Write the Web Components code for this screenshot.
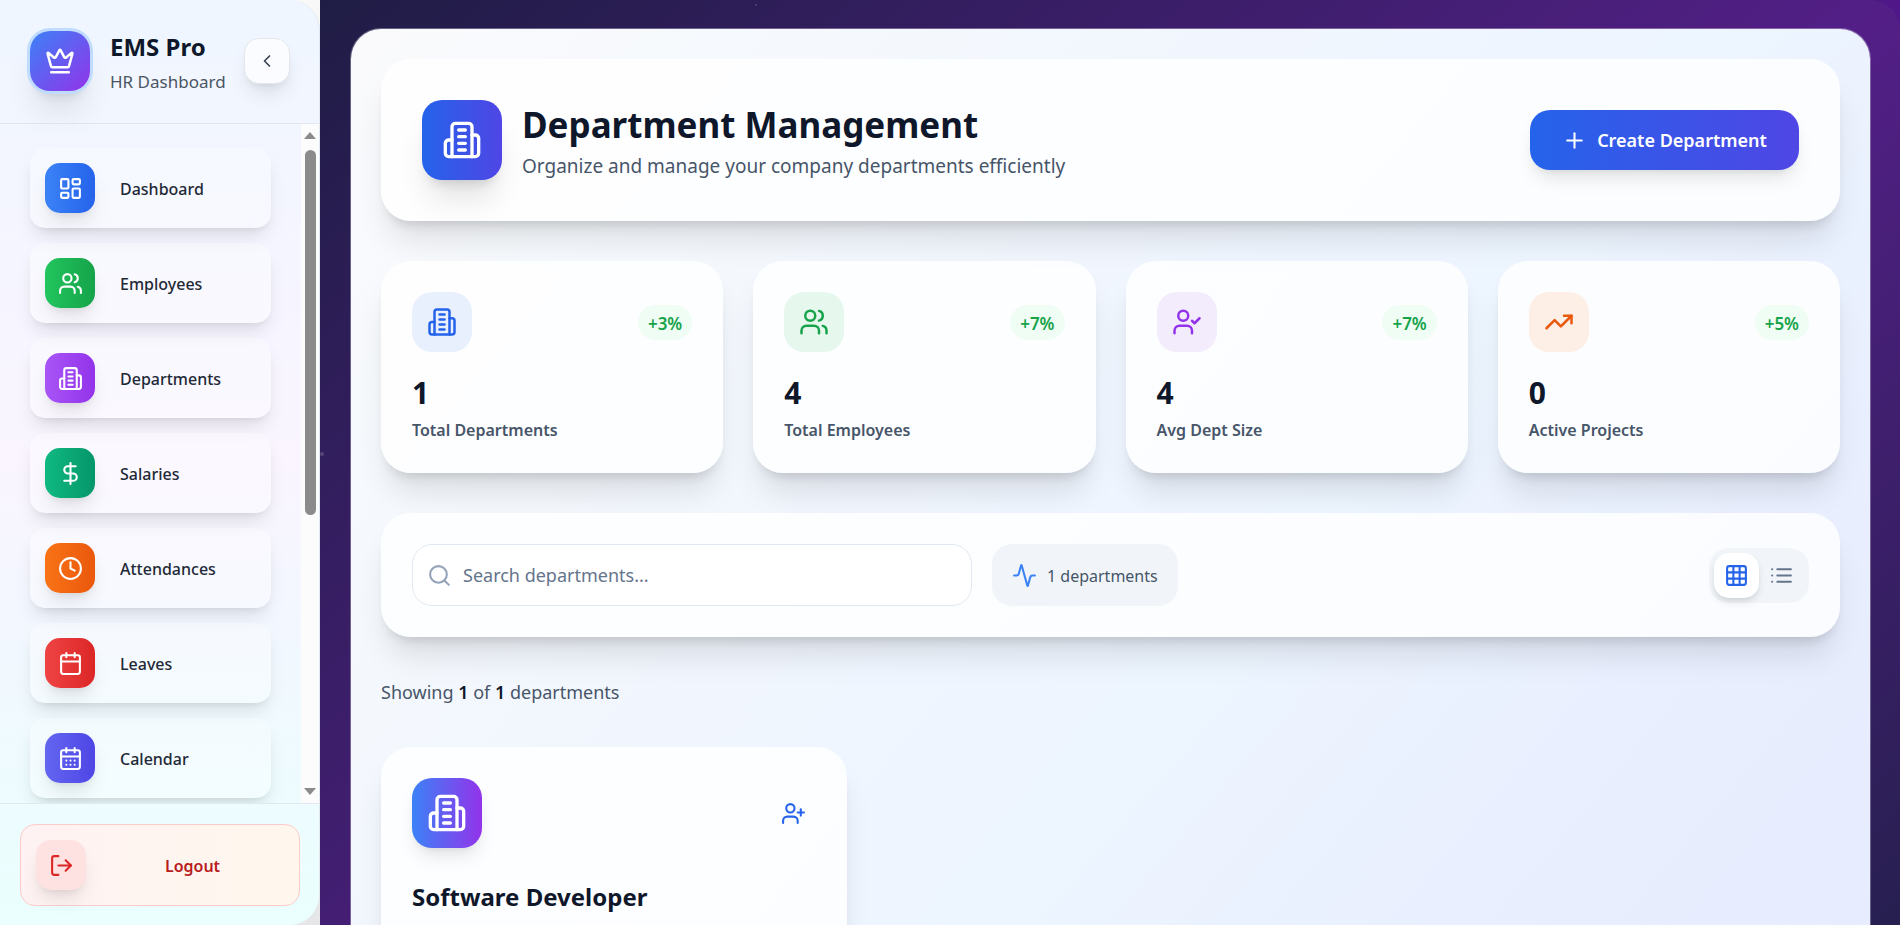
<!DOCTYPE html>
<html lang="en">
<head>
<meta charset="utf-8">
<meta name="viewport" content="width=device-width, initial-scale=1">
<title>EMS Pro - Department Management</title>
<style>
  html, body { margin: 0; height: 100%; overflow: hidden; }
  body {
    font-family: "Noto Sans", "Open Sans", sans-serif;
    font-size: 16px;
    color: #0f172a;
    background: linear-gradient(#f8f8f8, #e6e6e8);
    --shadow-lg: 0 12px 19px -4px rgba(0,0,0,.1), 0 5px 8px -5px rgba(0,0,0,.1);
    --shadow-xl: 0 25px 31px -6px rgba(0,0,0,.1), 0 10px 12px -7px rgba(0,0,0,.14);
  }
</style>
</head>
<body>
<ems-app>
  <ems-sidebar slot="sidebar">
    <nav-item icon="dashboard" from="#3b82f6" to="#2563eb">Dashboard</nav-item>
    <nav-item icon="users" from="#22c55e" to="#16a34a">Employees</nav-item>
    <nav-item icon="building" from="#a855f7" to="#9333ea">Departments</nav-item>
    <nav-item icon="dollar" from="#10b981" to="#059669">Salaries</nav-item>
    <nav-item icon="clock" from="#f97316" to="#ea580c">Attendances</nav-item>
    <nav-item icon="calendar" from="#ef4444" to="#dc2626">Leaves</nav-item>
    <nav-item icon="calendar-days" from="#6366f1" to="#4f46e5">Calendar</nav-item>
  </ems-sidebar>
  <page-header>
    <span slot="title">Department Management</span>
    <span slot="subtitle">Organize and manage your company departments efficiently</span>
  </page-header>
  <stat-grid>
    <stat-card icon="building" color="#2563eb" tint="#e8f0fe" value="1" change="+3%">Total Departments</stat-card>
    <stat-card icon="users" color="#16a34a" tint="#e6f7ee" value="4" change="+7%">Total Employees</stat-card>
    <stat-card icon="user-check" color="#9333ea" tint="#f3ecfd" value="4" change="+7%">Avg Dept Size</stat-card>
    <stat-card icon="trending-up" color="#ea580c" tint="#fdeee6" value="0" change="+5%">Active Projects</stat-card>
  </stat-grid>
  <filter-bar>1 departments</filter-bar>
  <result-count shown="1" total="1"></result-count>
  <department-grid>
    <department-card>Software Developer</department-card>
  </department-grid>
</ems-app>

<script>
const ICONS = {
  crown: '<path d="M11.562 3.266a.5.5 0 0 1 .876 0L15.39 8.87a1 1 0 0 0 1.516.294L21.183 5.5a.5.5 0 0 1 .798.519l-2.834 10.246a1 1 0 0 1-.956.734H5.81a1 1 0 0 1-.957-.734L2.02 6.02a.5.5 0 0 1 .798-.519l4.276 3.664a1 1 0 0 0 1.516-.294z"/><path d="M5 21h14"/>',
  'chevron-left': '<path d="m15 18-6-6 6-6"/>',
  dashboard: '<rect width="7" height="9" x="3" y="3" rx="1"/><rect width="7" height="5" x="14" y="3" rx="1"/><rect width="7" height="9" x="14" y="12" rx="1"/><rect width="7" height="5" x="3" y="16" rx="1"/>',
  users: '<path d="M16 21v-2a4 4 0 0 0-4-4H6a4 4 0 0 0-4 4v2"/><circle cx="9" cy="7" r="4"/><path d="M22 21v-2a4 4 0 0 0-3-3.87"/><path d="M16 3.13a4 4 0 0 1 0 7.75"/>',
  building: '<path d="M6 22V4a2 2 0 0 1 2-2h8a2 2 0 0 1 2 2v18Z"/><path d="M6 12H4a2 2 0 0 0-2 2v6a2 2 0 0 0 2 2h2"/><path d="M18 9h2a2 2 0 0 1 2 2v9a2 2 0 0 1-2 2h-2"/><path d="M10 6h4"/><path d="M10 10h4"/><path d="M10 14h4"/><path d="M10 18h4"/>',
  dollar: '<path d="M12 2v20"/><path d="M17 5H9.5a3.5 3.5 0 0 0 0 7h5a3.5 3.5 0 0 1 0 7H6"/>',
  clock: '<circle cx="12" cy="12" r="10"/><path d="M12 6v6l4 2"/>',
  calendar: '<path d="M8 2v4"/><path d="M16 2v4"/><rect width="18" height="18" x="3" y="4" rx="2"/><path d="M3 10h18"/>',
  'calendar-days': '<path d="M8 2v4"/><path d="M16 2v4"/><rect width="18" height="18" x="3" y="4" rx="2"/><path d="M3 10h18"/><path d="M8 14h.01"/><path d="M12 14h.01"/><path d="M16 14h.01"/><path d="M8 18h.01"/><path d="M12 18h.01"/><path d="M16 18h.01"/>',
  logout: '<path d="M9 21H5a2 2 0 0 1-2-2V5a2 2 0 0 1 2-2h4"/><path d="m16 17 5-5-5-5"/><path d="M21 12H9"/>',
  plus: '<path d="M5 12h14"/><path d="M12 5v14"/>',
  'user-check': '<path d="M16 21v-2a4 4 0 0 0-4-4H6a4 4 0 0 0-4 4v2"/><circle cx="9" cy="7" r="4"/><path d="m16 11 2 2 4-4"/>',
  'user-plus': '<path d="M16 21v-2a4 4 0 0 0-4-4H6a4 4 0 0 0-4 4v2"/><circle cx="9" cy="7" r="4"/><path d="M19 8v6"/><path d="M22 11h-6"/>',
  'trending-up': '<path d="m22 7-8.5 8.5-5-5L2 17"/><path d="M16 7h6v6"/>',
  search: '<circle cx="11" cy="11" r="8"/><path d="m21 21-4.3-4.3"/>',
  activity: '<path d="M22 12h-2.48a2 2 0 0 0-1.93 1.46l-2.35 8.36a.25.25 0 0 1-.48 0L9.24 2.18a.25.25 0 0 0-.48 0l-2.35 8.36A2 2 0 0 1 4.49 12H2"/>',
  grid: '<rect width="18" height="18" x="3" y="3" rx="2"/><path d="M3 9h18"/><path d="M3 15h18"/><path d="M9 3v18"/><path d="M15 3v18"/>',
  list: '<path d="M3 6h.01"/><path d="M3 12h.01"/><path d="M3 18h.01"/><path d="M8 6h13"/><path d="M8 12h13"/><path d="M8 18h13"/>'
};

const define = (name, render) => customElements.define(name, class extends HTMLElement {
  connectedCallback() {
    if (this.shadowRoot) return;
    this.attachShadow({ mode: 'open' }).innerHTML = render(this);
  }
});

const RESET = `
  *, :host { box-sizing: border-box; }
  button, input { font: inherit; color: inherit; margin: 0; padding: 0; border: 0; background: none; }
  button { cursor: pointer; }
`;

define('ui-icon', el => `
  <style>:host { display: block; flex: none; } svg { display: block; }</style>
  <svg width="${el.getAttribute('size')}" height="${el.getAttribute('size')}" viewBox="0 0 24 24" fill="none"
    stroke="currentColor" stroke-width="2" stroke-linecap="round" stroke-linejoin="round" aria-hidden="true">${ICONS[el.getAttribute('name')]}</svg>`);

define('ems-app', () => `
  <style>${RESET}
    :host { display: flex; height: 100vh; overflow: hidden; }
    .stage { position: relative; flex: 1; min-width: 0; overflow: hidden; background: #4f1788; }
    .sky {
      height: 100%; padding: 28px 29px 0 30px; border-top-right-radius: 30px;
      background: linear-gradient(140deg, #1f1d45, #531f87 59%, #271f50);
    }
    .star { position: absolute; border-radius: 50%; background: rgba(255,255,255,.18); }
    .star.a { left: 0; top: 452px; width: 4px; height: 4px; }
    .star.b { left: 435px; top: 4px; width: 2px; height: 2px; }
    main {
      display: flex; flex-direction: column; gap: 40px;
      padding: 30px; border: 1px solid rgba(255,255,255,.3); border-radius: 31px;
      background: linear-gradient(130deg, #fafafc, #f5f9fd 20%, #f1f6fe 38%, #edf5ff 60%, #e9effe 78%, #e6ebfe) padding-box;
    }
  </style>
  <slot name="sidebar"></slot>
  <div class="stage">
    <div class="sky"><main><slot></slot></main></div>
    <span class="star a"></span><span class="star b"></span>
  </div>`);

define('ems-sidebar', () => `
  <style>${RESET}
    :host {
      display: flex; flex-direction: column; flex: none; width: 320px; overflow: hidden;
      border-right: 1px solid #e2e8f0; border-radius: 0 30px 30px 0;
      background: linear-gradient(#eff6ff, #faf5ff 50%, #f3f7ff 66%, #eafffe);
    }
    header { display: flex; align-items: center; height: 124px; padding: 0 29px 1px 30px; border-bottom: 1px solid #e2e8f0; }
    .logo {
      display: grid; place-items: center; width: 60px; height: 60px; border-radius: 20px; color: #fff;
      background: linear-gradient(135deg, #3b82f6, #9333ea);
      box-shadow: 0 0 0 3px #bfdbfe, var(--shadow-xl);
    }
    .brand { flex: 1; padding: 5px 0 0 20px; white-space: nowrap; }
    h1 { margin: 0; font-size: 24px; line-height: 36px; font-weight: 700; }
    p { margin: 0; font-size: 17px; line-height: 34px; color: #4b5563; }
    .collapse {
      display: grid; place-items: center; width: 46px; height: 46px; border-radius: 15px; color: #374151;
      background: #fafcff; border: 1px solid #e5e7eb; box-shadow: var(--shadow-lg);
    }
    .scroller { display: flex; flex: 1; min-height: 0; }
    nav { flex: 1; display: flex; flex-direction: column; gap: 15px; padding: 24px 30px; overflow: hidden; }
    .bar {
      display: flex; flex-direction: column; align-items: center; justify-content: space-between;
      width: 18px; padding: 8px 0; background: #fcfcfc;
    }
    .thumb { width: 11px; flex: 0 0 55%; border-radius: 6px; background: #8b8b8b; }
    .up, .down { border: 6px solid transparent; width: 0; height: 0; }
    .up { border-top: 0; border-bottom: 7px solid #8b8b8b; margin-bottom: 11px; }
    .down { border-bottom: 0; border-top: 7px solid #8b8b8b; margin-top: auto; }
    footer { padding: 20px 19px 19px 20px; border-top: 1px solid #e2e8f0; }
    .logout {
      display: flex; align-items: center; gap: 15px; width: 100%; height: 82px; padding: 0 15px;
      border: 1px solid #fecaca; border-radius: 15px; color: #b91c1c; font-weight: 600;
      background: linear-gradient(90deg, #fef2f2, #fff7ed);
    }
    .logout span { flex: 1; padding-top: 2px; text-align: center; }
    .badge {
      display: grid; place-items: center; width: 50px; height: 50px; border-radius: 15px;
      background: #fee2e2; color: #dc2626; box-shadow: var(--shadow-lg);
    }
  </style>
  <header>
    <div class="logo"><ui-icon name="crown" size="30"></ui-icon></div>
    <div class="brand"><h1>EMS Pro</h1><p>HR Dashboard</p></div>
    <button class="collapse" aria-label="Collapse sidebar"><ui-icon name="chevron-left" size="20"></ui-icon></button>
  </header>
  <div class="scroller">
    <nav><slot></slot></nav>
    <div class="bar"><i class="up"></i><i class="thumb"></i><i class="down"></i></div>
  </div>
  <footer>
    <button class="logout"><i class="badge"><ui-icon name="logout" size="25"></ui-icon></i><span>Logout</span></button>
  </footer>`);

define('nav-item', el => `
  <style>${RESET}
    :host { display: block; flex: none; }
    a {
      display: flex; align-items: center; gap: 25px; height: 80px; padding: 0 15px; border-radius: 15px;
      color: #1f2937; font-weight: 500; text-decoration: none;
      background: rgba(255,255,255,.3); box-shadow: var(--shadow-lg);
    }
    i {
      display: grid; place-items: center; width: 50px; height: 50px; border-radius: 15px; color: #fff;
      background: linear-gradient(90deg, ${el.getAttribute('from')}, ${el.getAttribute('to')});
      box-shadow: var(--shadow-lg);
    }
    span { padding-top: 2px; }
  </style>
  <a href="#"><i><ui-icon name="${el.getAttribute('icon')}" size="25"></ui-icon></i><span><slot></slot></span></a>`);

const CARD = `background: rgba(255,255,255,.82); border-radius: 30px; box-shadow: var(--shadow-xl);`;

define('page-header', () => `
  <style>${RESET}
    :host { display: flex; align-items: center; gap: 20px; padding: 41px; ${CARD} }
    .mark {
      display: grid; place-items: center; flex: none; width: 80px; height: 80px; border-radius: 20px; color: #fff;
      background: linear-gradient(90deg, #2563eb, #4f46e5); box-shadow: var(--shadow-xl);
    }
    .text { flex: 1; min-width: 0; padding-top: 2px; }
    h2 { margin: 0 0 4px; font-size: 35px; line-height: 46px; font-weight: 700; }
    p { margin: 0; font-size: 19px; line-height: 28px; color: #475569; }
    button {
      display: flex; align-items: center; justify-content: center; gap: 10px;
      min-width: 269px; height: 60px; padding: 0 30px; border-radius: 20px; color: #fff;
      font-size: 18px; font-weight: 600; white-space: nowrap;
      background: linear-gradient(90deg, #2563eb, #4f46e5); box-shadow: var(--shadow-lg);
    }
  </style>
  <div class="mark"><ui-icon name="building" size="40"></ui-icon></div>
  <div class="text"><h2><slot name="title"></slot></h2><p><slot name="subtitle"></slot></p></div>
  <button><ui-icon name="plus" size="25"></ui-icon>Create Department</button>`);

define('stat-grid', () => `
  <style>:host { display: grid; grid-template-columns: repeat(4, 1fr); gap: 30px; }</style><slot></slot>`);

define('stat-card', el => `
  <style>${RESET}
    :host { display: block; padding: 31px; ${CARD} }
    .top { display: flex; align-items: center; justify-content: space-between; margin-bottom: 20px; }
    .tile {
      display: grid; place-items: center; width: 60px; height: 60px; border-radius: 20px;
      background: ${el.getAttribute('tint')}; color: ${el.getAttribute('color')};
    }
    .change {
      padding: 2px 10px 0; border-radius: 18px; background: #f0fdf4; color: #16a34a;
      font-size: 17px; line-height: 33px; font-weight: 600;
    }
    .value { margin-bottom: 4px; font-size: 30px; line-height: 42px; font-weight: 700; }
    .label { font-size: 16px; line-height: 24px; font-weight: 600; color: #475569; }
  </style>
  <div class="top">
    <div class="tile"><ui-icon name="${el.getAttribute('icon')}" size="30"></ui-icon></div>
    <span class="change">${el.getAttribute('change')}</span>
  </div>
  <div class="value">${el.getAttribute('value')}</div>
  <div class="label"><slot></slot></div>`);

define('filter-bar', () => `
  <style>${RESET}
    :host { display: flex; align-items: center; gap: 20px; padding: 31px; ${CARD} }
    label {
      display: flex; align-items: center; gap: 11px; flex: 0 1 560px; height: 62px; padding: 0 14px;
      border: 1px solid #e2e8f0; border-radius: 20px; background: #fff; color: #94a3b8;
    }
    input { flex: 1; min-width: 0; height: 100%; font-size: 18px; color: #0f172a; outline: 0; }
    input::placeholder { color: #64748b; opacity: 1; }
    .chip {
      display: flex; align-items: center; gap: 10px; height: 62px; padding: 0 20px; border-radius: 20px;
      background: #f1f5f9; color: #475569; white-space: nowrap;
    }
    .chip ui-icon { color: #3b82f6; }
    .chip span { padding-top: 2px; }
    .views { display: flex; margin-left: auto; padding: 5px; border-radius: 20px; background: #f1f5f9; }
    .views button { display: grid; place-items: center; width: 45px; height: 45px; border-radius: 15px; color: #64748b; }
    .views .on { background: #fff; color: #2563eb; box-shadow: 0 5px 8px -1px rgba(0,0,0,.1), 0 2px 5px -2px rgba(0,0,0,.1); }
  </style>
  <label><ui-icon name="search" size="25"></ui-icon><input type="text" aria-label="Search departments" placeholder="Search departments..."></label>
  <div class="chip"><ui-icon name="activity" size="25"></ui-icon><span><slot></slot></span></div>
  <div class="views">
    <button class="on" aria-label="Grid view" aria-pressed="true"><ui-icon name="grid" size="25"></ui-icon></button>
    <button aria-label="List view" aria-pressed="false"><ui-icon name="list" size="25"></ui-icon></button>
  </div>`);

define('result-count', el => `
  <style>
    :host { display: block; font-size: 18px; line-height: 30px; color: #475569; }
    b { font-weight: 600; color: #0f172a; }
  </style>Showing <b>${el.getAttribute('shown')}</b> of <b>${el.getAttribute('total')}</b> departments`);

define('department-grid', () => `
  <style>:host { display: grid; grid-template-columns: repeat(3, 1fr); gap: 30px; }</style><slot></slot>`);

define('department-card', () => `
  <style>${RESET}
    :host { display: block; padding: 31px 31px 60px; ${CARD} }
    .top { display: flex; align-items: center; justify-content: space-between; margin-bottom: 30px; }
    .tile {
      display: grid; place-items: center; width: 70px; height: 70px; border-radius: 20px; color: #fff;
      background: linear-gradient(90deg, #3b82f6, #9333ea); box-shadow: var(--shadow-lg);
    }
    button { display: grid; place-items: center; width: 45px; height: 45px; border-radius: 15px; color: #2563eb; }
    h3 { margin: 0; font-size: 24px; line-height: 38px; font-weight: 700; }
  </style>
  <div class="top">
    <div class="tile"><ui-icon name="building" size="40"></ui-icon></div>
    <button aria-label="Add employee"><ui-icon name="user-plus" size="25"></ui-icon></button>
  </div>
  <h3><slot></slot></h3>`);
</script>
</body>
</html>
